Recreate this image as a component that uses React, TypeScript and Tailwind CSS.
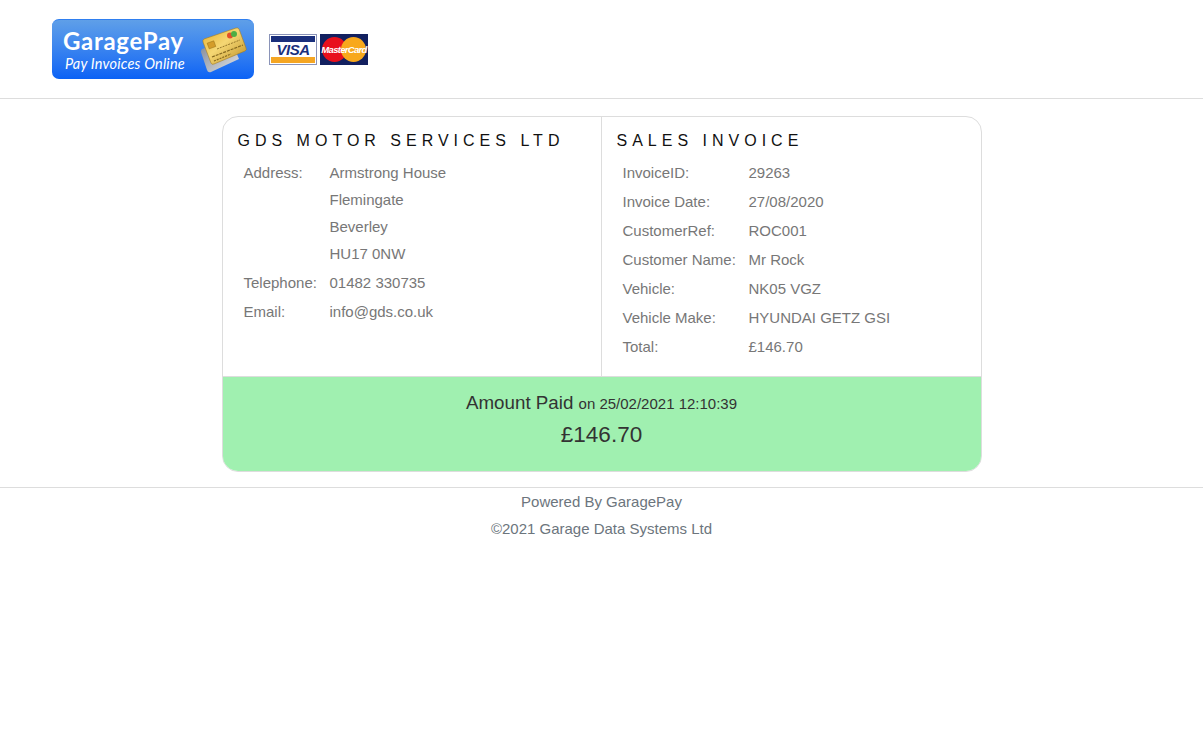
import React from 'react';

const customerRows = [
  ['InvoiceID:', '29263'],
  ['Invoice Date:', '27/08/2020'],
  ['CustomerRef:', 'ROC001'],
  ['Customer Name:', 'Mr Rock'],
  ['Vehicle:', 'NK05 VGZ'],
  ['Vehicle Make:', 'HYUNDAI GETZ GSI'],
  ['Total:', '£146.70'],
];

// little stack of credit cards on the logo
const CardsIcon = () => (
  <svg width="46" height="48" viewBox="0 0 46 48" className="shrink-0">
    <defs>
      <linearGradient id="gold" x1="0" y1="0" x2="1" y2="1">
        <stop offset="0" stopColor="#e8b02c" />
        <stop offset="0.45" stopColor="#f5d774" />
        <stop offset="1" stopColor="#b98a1f" />
      </linearGradient>
      <linearGradient id="silver" x1="0" y1="0" x2="1" y2="1">
        <stop offset="0" stopColor="#7d8594" />
        <stop offset="1" stopColor="#e3e4e6" />
      </linearGradient>
    </defs>
    <path d="M1 23 L30 14 L38 33 L10 46 Q7 47 6 44 L0 26 Q0 24 1 23 Z" fill="url(#silver)" />
    <path d="M3 13 L35 2 Q37 1.500 38 3 L45 22 Q46 24 44 25 L13 38 Q10.500 39 10 37 L2 16 Q1.500 14 3 13 Z" fill="url(#gold)" stroke="#a67c1e" strokeWidth="0.6" />
    <circle cx="29" cy="9.500" r="3" fill="#e2502a" />
    <circle cx="33" cy="8" r="3" fill="#4fae44" />
    <rect x="7" y="16" width="7" height="6" transform="rotate(-20 10 19)" fill="#d49c2a" stroke="#96701a" strokeWidth="0.5" />
    <path d="M11 31 L42 19" stroke="#85681f" strokeWidth="1.200" strokeDasharray="3 1" />
    <path d="M13 35 L30 28" stroke="#85681f" strokeWidth="1.200" strokeDasharray="2 1" />
    <path d="M16 23 L39 14" stroke="#96782a" strokeWidth="1" strokeDasharray="2 1" />
  </svg>
);

const VisaBadge = () => (
  <div className="w-[48px] h-[31px] border border-[#8a93b8] bg-white p-[1px] flex flex-col">
    <div className="h-[6px] bg-[#1a2f7c]" />
    <div className="flex-1 flex items-center justify-center text-[#1a2f7c] font-bold italic text-[15px] leading-none tracking-[-0.5px]">
      VISA
    </div>
    <div className="h-[7px] bg-[#f5a623]" />
  </div>
);

const MasterBadge = () => (
  <div className="relative w-[48px] h-[31px] bg-[#12205f] overflow-hidden">
    <div className="absolute left-[2px] top-[3px] w-[25px] h-[25px] rounded-full bg-[#e8101c]" />
    <div className="absolute left-[21px] top-[3px] w-[25px] h-[25px] rounded-full bg-[#f8a81c]" />
    <div className="absolute inset-0 flex items-center justify-center text-white font-bold italic text-[9.5px] tracking-[-0.7px] leading-none">
      MasterCard
    </div>
  </div>
);

export default function App() {
  return (
    <div className="min-h-[737px] bg-white text-[15px] leading-[27px] text-[#777777] font-['Liberation_Sans',Arial,sans-serif]">
      {/* Header */}
      <header className="h-[99px] border-b border-[#dddddd] pl-[52px] pt-[19px] flex items-start">
        <div className="w-[202px] h-[60px] rounded-[7px] bg-gradient-to-b from-[#5f9fe8] to-[#0a62f5] border-t border-[#2f7ff0] flex items-center pl-[11px] pr-[7px] justify-between">
          <div className="flex flex-col text-white font-['Lato','Noto_Sans',sans-serif]">
            <span className="text-[24px] font-bold leading-[28px] tracking-[0.7px]">GaragePay</span>
            <span className="text-[14.5px] italic leading-[18px] pl-[2px] tracking-[0.2px]">Pay Invoices Online</span>
          </div>
          <CardsIcon />
        </div>
        <div className="flex gap-[3px] ml-[15px] mt-[15px]">
          <VisaBadge />
          <MasterBadge />
        </div>
      </header>

      {/* Invoice card */}
      <main className="w-[760px] h-[356px] mt-[17px] mx-auto border border-[#dddddd] rounded-[16px] overflow-hidden flex flex-col">
        <div className="flex h-[260px] border-b border-[#dddddd]">
          <section className="w-[379px] border-r border-[#dddddd] pl-[15px] pt-[12px]">
            <h2 className="text-[16px] leading-[24px] text-[#111111] tracking-[5px] mb-[6px]">GDS MOTOR SERVICES LTD</h2>
            <div className="grid grid-cols-[86px_1fr] pl-[6px]">
              <span>Address:</span>
              <div className="flex flex-col">
                <span>Armstrong House</span>
                <span>Flemingate</span>
                <span>Beverley</span>
                <span>HU17 0NW</span>
              </div>
              <span className="mt-[2px]">Telephone:</span>
              <span className="mt-[2px]">01482 330735</span>
              <span className="mt-[2px]">Email:</span>
              <span className="mt-[2px]">info@gds.co.uk</span>
            </div>
          </section>
          <section className="flex-1 pl-[15px] pt-[12px]">
            <h2 className="text-[16px] leading-[24px] text-[#111111] tracking-[5px] mb-[6px]">SALES INVOICE</h2>
            <div className="grid grid-cols-[126px_1fr] auto-rows-[29px] pl-[6px]">
              {customerRows.map(([label, value]) => (
                <React.Fragment key={label}>
                  <span>{label}</span>
                  <span>{value}</span>
                </React.Fragment>
              ))}
            </div>
          </section>
        </div>
        <div className="flex-1 bg-[#a0f0b0] text-center text-[#333333] pt-[12px]">
          <p className="text-[18.75px] leading-[27px]">
            Amount Paid <span className="text-[15px]">on 25/02/2021 12:10:39</span>
          </p>
          <p className="text-[22.5px] leading-[36px]">£146.70</p>
        </div>
      </main>

      {/* Footer */}
      <footer className="mt-[15px] border-t border-[#dddddd] text-center text-[#6c757d]">
        <p>Powered By GaragePay</p>
        <p>©2021 Garage Data Systems Ltd</p>
      </footer>
    </div>
  );
}
